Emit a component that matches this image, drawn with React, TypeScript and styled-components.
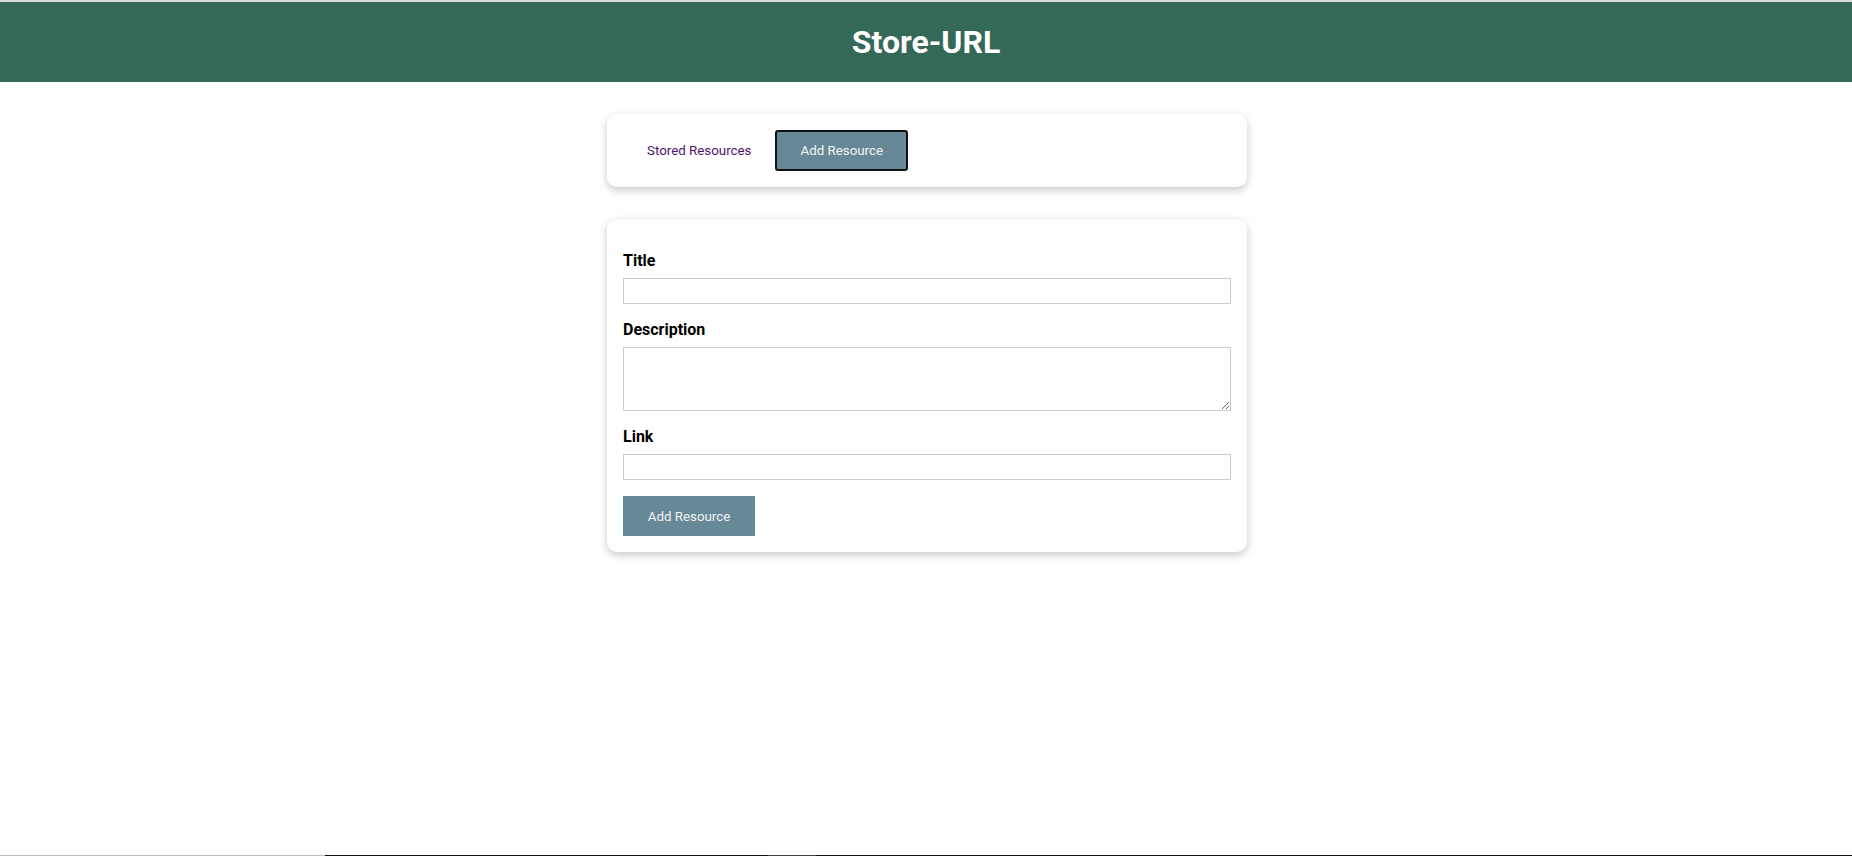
import React, { useState } from "react";
import styled, { createGlobalStyle } from "styled-components";

const GlobalStyle = createGlobalStyle`
  html, body {
    margin: 0;
    padding: 0;
    background: #ffffff;
    font-family: Roboto, "Liberation Sans", Arial, sans-serif;
  }
  * { box-sizing: border-box; }
`;

const Page = styled.div`
  min-height: 100vh;
  display: flex;
  flex-direction: column;
  border-top: 2px solid #dcdcdc;
`;

const Header = styled.header`
  height: 80px;
  background: #346857;
  display: flex;
  align-items: center;
  justify-content: center;
`;

const HeaderTitle = styled.h1`
  margin: 0;
  color: #ffffff;
  font-size: 32px;
  font-weight: 700;
  line-height: 1;
`;

const Main = styled.main`
  flex: 1;
  display: flex;
  flex-direction: column;
  align-items: center;
  padding-top: 32px;
  padding-left: 2px;
  gap: 32px;
`;

const Card = styled.section`
  width: 640px;
  background: #ffffff;
  border-radius: 10px;
  box-shadow: 0 3px 8px rgba(0, 0, 0, 0.22);
  padding: 16px;
`;

const Nav = styled.nav`
  display: flex;
  align-items: center;
`;

const Tab = styled.button<{ $active?: boolean }>`
  height: 41px;
  padding: 0 ${(p) => (p.$active ? "23px" : "22px")};
  font-family: Roboto, "Liberation Sans", Arial, sans-serif;
  font-size: 13.333px;
  cursor: pointer;
  border-radius: 3px;
  border: ${(p) => (p.$active ? "2px solid #111111" : "2px solid transparent")};
  background: ${(p) => (p.$active ? "#678897" : "transparent")};
  color: ${(p) => (p.$active ? "#f2f4f5" : "#4d1470")};
`;

const Form = styled.form`
  display: flex;
  flex-direction: column;
  padding-top: 16px;
`;

const Field = styled.div`
  display: flex;
  flex-direction: column;
  margin-bottom: 16px;
`;

const Label = styled.label`
  font-size: 16px;
  font-weight: 700;
  color: #000000;
  line-height: 19px;
  margin-bottom: 8px;
`;

const TextInput = styled.input`
  width: 100%;
  height: 26px;
  border: 1px solid #cccccc;
  border-radius: 0;
  padding: 2px 4px;
  font-family: Roboto, "Liberation Sans", Arial, sans-serif;
  font-size: 13px;
  outline: none;
`;

const TextArea = styled.textarea`
  width: 100%;
  height: 64px;
  border: 1px solid #cccccc;
  border-radius: 0;
  padding: 2px 4px;
  font-family: Roboto, "Liberation Sans", Arial, sans-serif;
  font-size: 13px;
  outline: none;
  display: block;
`;

const SubmitButton = styled.button`
  align-self: flex-start;
  width: 132px;
  height: 40px;
  border: none;
  background: #678897;
  color: #f2f4f5;
  font-family: Roboto, "Liberation Sans", Arial, sans-serif;
  font-size: 13.333px;
  cursor: pointer;
`;

const BottomStrip = styled.div`
  height: 1px;
  display: flex;
`;

const StripSegment = styled.div<{ $color: string; $width?: string }>`
  background: ${(p) => p.$color};
  width: ${(p) => p.$width || "auto"};
  flex: ${(p) => (p.$width ? "none" : "1")};
`;

export default function App() {
  const [tab, setTab] = useState<"stored" | "add">("add");
  return (
    <>
      <GlobalStyle />
      <Page>
        <Header>
          <HeaderTitle>Store-URL</HeaderTitle>
        </Header>
        <Main>
          <Card>
            <Nav>
              <Tab $active={tab === "stored"} onClick={() => setTab("stored")}>
                Stored Resources
              </Tab>
              <Tab $active={tab === "add"} onClick={() => setTab("add")}>
                Add Resource
              </Tab>
            </Nav>
          </Card>
          <Card>
            <Form onSubmit={(e) => e.preventDefault()}>
              <Field>
                <Label htmlFor="title">Title</Label>
                <TextInput id="title" type="text" />
              </Field>
              <Field>
                <Label htmlFor="description">Description</Label>
                <TextArea id="description" />
              </Field>
              <Field>
                <Label htmlFor="link">Link</Label>
                <TextInput id="link" type="text" />
              </Field>
              <SubmitButton type="submit">Add Resource</SubmitButton>
            </Form>
          </Card>
        </Main>
        <BottomStrip>
          <StripSegment $color="#bdbdbd" $width="325px" />
          <StripSegment $color="#111111" $width="443px" />
          <StripSegment $color="#444444" $width="48px" />
          <StripSegment $color="#111111" />
        </BottomStrip>
      </Page>
    </>
  );
}
